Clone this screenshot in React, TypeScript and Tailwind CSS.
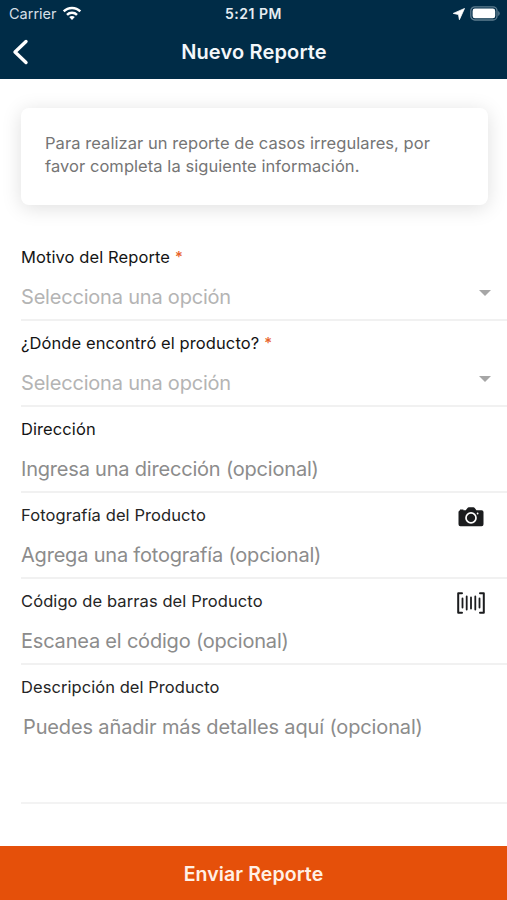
import type { ReactNode } from "react";

type FieldProps = {
  label: string;
  placeholder: string;
  required?: boolean;
  select?: boolean;
  icon?: ReactNode;
  labelClass?: string;
  placeholderClass: string;
};

function WifiIcon() {
  return (
    <svg className="ml-[5px] h-[15px] w-[20px]" viewBox="0 0 20 15" fill="none" stroke="#fff" strokeWidth="2.5">
      <path d="M1.7 5.4C6.2.8 13.8.8 18.3 5.4" />
      <path d="M5 8.8C7.8 6 12.2 6 15 8.8" />
      <path d="M10 14L7.2 11.1C8.7 9.7 11.3 9.7 12.8 11.1Z" fill="#fff" stroke="none" />
    </svg>
  );
}

function CameraIcon() {
  return (
    <svg className="mt-[4px] mr-px h-[20px] w-[26px]" viewBox="0 0 26 20">
      <path
        fill="#1b1c1e"
        d="M2 3.2V2.5h3.4v.7h2.4L9.5.9Q10 .3 10.8.3h4.6q.8 0 1.3.6l1.7 2.3h5.2q1.9 0 1.9 1.9v12.2q0 1.9-1.9 1.9H2.4q-1.9 0-1.9-1.9V5.1Q.5 3.5 2 3.2Z"
      />
      <circle cx="13" cy="10.9" r="5" fill="none" stroke="#fff" strokeWidth="1.7" />
      <circle cx="19.6" cy="6.5" r="0.9" fill="#fff" />
    </svg>
  );
}

function BarcodeIcon() {
  return (
    <svg className="mt-[4px] h-[22px] w-[28px]" viewBox="0 0 28 22" fill="none" stroke="#1b1c1e" strokeLinejoin="round" strokeLinecap="round">
      <path d="M5 1.2H1.2v19.6H5M23 1.2h3.8v19.6H23" strokeWidth="2" />
      <path d="M5.5 6.5v9M9.7 4.5v13M14 5.5v11M18.3 4.5v13M22.5 6.5v9" strokeWidth="1.8" />
    </svg>
  );
}

function Field({ label, placeholder, required, select, icon, labelClass = "text-[#151515]", placeholderClass }: FieldProps) {
  return (
    <div className="ml-[21px] flex h-[86px] flex-col border-b-2 border-[#f1f1f1] pr-[22px]">
      <div className="flex h-[44px] items-center justify-between">
        <label className={`flex items-center whitespace-nowrap text-[16.5px] leading-6 tracking-[0.09px] ${labelClass}`}>
          {label}
          {required && <span className="ml-[5px] text-[15px] font-medium text-[#e8622a]">*</span>}
        </label>
        {icon}
      </div>
      <div className="flex h-[35px] items-center justify-between">
        <span className={`whitespace-nowrap text-[20px] leading-7 tracking-[-0.2px] ${placeholderClass}`}>{placeholder}</span>
        {select && (
          <svg className="-mr-[6px] mb-[8px] h-[6px] w-[12px]" viewBox="0 0 12 6">
            <path d="M0 0h12L6 6Z" fill="#a6a6a6" />
          </svg>
        )}
      </div>
    </div>
  );
}

export default function App() {
  return (
    <main className="flex h-[900px] w-[507px] flex-col overflow-hidden bg-white font-['Inter',sans-serif]">
      <header className="h-[79px] shrink-0 bg-[#002c47] text-white">
        <div className="grid h-[27px] grid-cols-3 items-center">
          <div className="flex items-center pl-[9px]">
            <span className="text-[14.5px] leading-5 text-[#d5dfe6]">Carrier</span>
            <WifiIcon />
          </div>
          <span className="text-center text-[14px] font-semibold leading-5 tracking-[0.5px] text-[#e6edf2]">5:21 PM</span>
          <div className="flex items-center justify-end pr-[7px]">
            <svg className="mr-[5px] h-[12px] w-[12px]" viewBox="0 0 12 12">
              <path d="M11.5.5L.3 5.4l5.2 1.1.9 5.2Z" fill="#fff" stroke="#fff" strokeWidth=".8" strokeLinejoin="round" />
            </svg>
            <svg className="h-[15px] w-[30px]" viewBox="0 0 30 15">
              <rect x=".8" y=".8" width="26.2" height="13.2" rx="4" fill="none" stroke="#5e7d90" strokeWidth="1.3" />
              <rect x="2.6" y="2.6" width="22.6" height="9.6" rx="2.3" fill="#fff" />
              <path d="M28.2 5v5q1.5-.7 1.5-2.5T28.2 5Z" fill="#5e7d90" />
            </svg>
          </div>
        </div>
        <div className="grid h-[50px] grid-cols-[60px_1fr_60px] items-center">
          <svg className="ml-[12px] h-[26px] w-[17px]" viewBox="0 0 17 26" fill="none" stroke="#fff" strokeWidth="3.4" strokeLinecap="round" strokeLinejoin="round">
            <path d="M14 2.5L3 13l11 10.5" />
          </svg>
          <h1 className="pl-px text-center text-[20px] font-semibold leading-7 tracking-[0.15px] text-[#f3f7fa]">Nuevo Reporte</h1>
        </div>
      </header>

      <section className="ml-[21px] mr-[19px] mt-[29px] h-[97px] shrink-0 rounded-[8px] bg-white pl-[24px] pt-[24px] text-[16.5px] leading-[23px] tracking-[0.06px] text-[#757575] shadow-[0_3px_20px_rgba(0,0,0,0.13)]">
        <p className="whitespace-nowrap">Para realizar un reporte de casos irregulares, por</p>
        <p className="whitespace-nowrap">favor completa la siguiente información.</p>
      </section>

      <form className="mt-[30px] flex flex-col">
        <Field label="Motivo del Reporte" placeholder="Selecciona una opción" required select placeholderClass="text-[#b4b4b4]" />
        <Field label="¿Dónde encontró el producto?" placeholder="Selecciona una opción" required select placeholderClass="text-[#b4b4b4]" />
        <Field label="Dirección" placeholder="Ingresa una dirección (opcional)" placeholderClass="text-[#8c8c8c]" />
        <Field label="Fotografía del Producto" placeholder="Agrega una fotografía (opcional)" icon={<CameraIcon />} labelClass="text-[#252525]" placeholderClass="text-[#8c8c8c]" />
        <Field label="Código de barras del Producto" placeholder="Escanea el código (opcional)" icon={<BarcodeIcon />} labelClass="text-[#252525]" placeholderClass="text-[#8c8c8c]" />
        <div className="ml-[21px] h-[139px] border-b-2 border-[#f3f3f3]">
          <div className="flex h-[44px] items-center">
            <label className="whitespace-nowrap text-[16.5px] leading-6 tracking-[0.06px] text-[#252525]">Descripción del Producto</label>
          </div>
          <div className="flex h-[35px] items-center pl-[2px]">
            <span className="whitespace-nowrap text-[20px] leading-7 tracking-[-0.14px] text-[#8c8c8c]">Puedes añadir más detalles aquí (opcional)</span>
          </div>
        </div>
      </form>

      <button className="mt-auto h-[54px] shrink-0 bg-[#e5500a] pt-[3px] text-[19.5px] font-semibold tracking-[0.1px] text-[#fff0e6]">Enviar Reporte</button>
    </main>
  );
}
